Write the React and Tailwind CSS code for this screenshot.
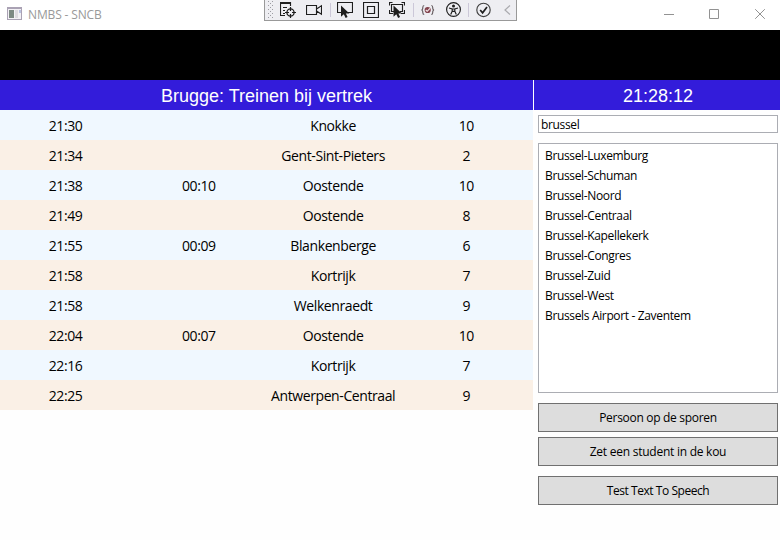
import React from 'react';

const departures = [
  ['21:30', '', 'Knokke', '10'],
  ['21:34', '', 'Gent-Sint-Pieters', '2'],
  ['21:38', '00:10', 'Oostende', '10'],
  ['21:49', '', 'Oostende', '8'],
  ['21:55', '00:09', 'Blankenberge', '6'],
  ['21:58', '', 'Kortrijk', '7'],
  ['21:58', '', 'Welkenraedt', '9'],
  ['22:04', '00:07', 'Oostende', '10'],
  ['22:16', '', 'Kortrijk', '7'],
  ['22:25', '', 'Antwerpen-Centraal', '9'],
];

const stations = [
  'Brussel-Luxemburg',
  'Brussel-Schuman',
  'Brussel-Noord',
  'Brussel-Centraal',
  'Brussel-Kapellekerk',
  'Brussel-Congres',
  'Brussel-Zuid',
  'Brussel-West',
  'Brussels Airport - Zaventem',
];

function Icon({ className = '', w = 16, children }) {
  return (
    <svg width={w} height="16" viewBox={`0 0 ${w} 16`} fill="none" stroke="#1e1e1e" strokeWidth="1.15" className={`shrink-0 ${className}`}>
      {children}
    </svg>
  );
}

function Separator({ className }) {
  return <div className={`h-[14px] w-px shrink-0 bg-[#ccc8d8] ${className}`} />;
}

const cursor = 'M0 0V10.5L2.6 8.2L4.3 11.5L6.1 10.6L4.5 7.5H7.8Z';

function DebugToolbar() {
  return (
    <div className="absolute left-[264px] top-0 flex h-[21px] w-[253px] items-center border-x border-b border-[#999] bg-[#eeeef2]">
      <svg width="6" height="18" className="ml-[3px] shrink-0" fill="#9c9ca2">
        {[0, 4, 8, 12, 16].map((y) => (
          <g key={y}>
            <rect x="0" y={y} width="1" height="1" />
            <rect x="4" y={y} width="1" height="1" />
            {y < 16 && <rect x="2" y={y + 2} width="1" height="1" />}
          </g>
        ))}
      </svg>
      <Icon className="ml-[6px]">
        <path d="M.5 13.5V.5H10.5V4" />
        <path d="M0 1.5H11M3 5.5H7M3 8.5H5M3 11.5H5M0 13.5H5" />
        <circle cx="10.5" cy="10.5" r="3.6" strokeWidth="1.3" />
        <path d="M10.5 5V9M10.5 12V16M5 10.5H9M12 10.5H16" strokeWidth="1.2" />
      </Icon>
      <Icon className="ml-[10px]">
        <path d="M.5 3.5H10.5V12.5H.5ZM10.5 7L15.5 3.8V12.2L10.5 9" />
      </Icon>
      <Separator className="ml-[8px]" />
      <Icon className="ml-[6px]">
        <path d="M4 10.5H.5V.5H15.5V10.5H11" />
        <path d={cursor} fill="#1e1e1e" stroke="none" transform="translate(4 3.5) scale(1.08)" />
      </Icon>
      <Icon className="ml-[10px]">
        <path d="M.5 .5H15.5V15.5H.5ZM4.5 4.5H11.5V11.5H4.5Z" strokeWidth="1.2" />
      </Icon>
      <Icon className="ml-[10px]">
        <path d="M3.5 .5H.5V3.5M12.5 .5H15.5V3.5M.5 8V11.5H4M15.5 8V11.5H12M5 9.5H2.5V2.5H13.5V9.5H11" />
        <path d={cursor} fill="#1e1e1e" stroke="none" transform="translate(4.5 3.5) scale(1.08)" />
      </Icon>
      <Separator className="ml-[8px]" />
      <Icon w={14} className="ml-[7px]">
        <path d="M3.2 3.5C1.8 3.5 1.8 4 1.8 5.5S1.5 8 .4 8C1.5 8 1.8 9 1.8 10.5S1.8 12.5 3.2 12.5M10.3 3.5C11.7 3.5 11.7 4 11.7 5.5S12 8 13.1 8C12 8 11.7 9 11.7 10.5S11.7 12.5 10.3 12.5" stroke="#665d60" />
        <circle cx="6.7" cy="8" r="3.1" fill="#83444e" stroke="none" />
        <path d="M4.8 8L6.2 9.3L9 6.3" stroke="#f4e8ea" />
      </Icon>
      <Icon className="ml-[11px]">
        <circle cx="7.5" cy="7.5" r="6.9" />
        <circle cx="7.5" cy="3.9" r="1.5" fill="#1e1e1e" stroke="none" />
        <path d="M3 6L6.2 7V9.2L4.7 12.5M12 6L8.8 7V9.2L10.3 12.5M6.2 7H8.8M6.5 9.4H8.5" strokeWidth="1.2" />
      </Icon>
      <Separator className="ml-[6px]" />
      <Icon className="ml-[7px]">
        <circle cx="7.5" cy="7.9" r="6.7" stroke="#404040" />
        <path d="M4.2 8L6.6 10.8L11 5" strokeWidth="1.7" />
      </Icon>
      <Icon w={7} className="ml-[12px]">
        <path d="M6 3.5L1 8L6 12.5" stroke="#aaaaae" strokeWidth="1.2" />
      </Icon>
    </div>
  );
}

function TitleBar() {
  return (
    <header className="relative flex h-[30px] items-center bg-white">
      <svg width="15" height="14" viewBox="0 0 15 14" className="ml-[7px] mt-[-2px]">
        <rect x=".5" y=".5" width="14" height="12" fill="#f3f1f5" stroke="#aaa2b4" />
        <path d="M0 1H15" stroke="#aaa2b4" strokeWidth="2" />
        <rect x="2" y="3" width="5" height="8" fill="#7d8a83" />
        <rect x="8" y="3" width="3" height="8" fill="#dedbe0" />
        <rect x="12" y="3" width="2" height="3" fill="#bac1df" />
      </svg>
      <span className="ml-[6px] text-[12px] leading-[16px] tracking-[-0.15px] text-[#999]">NMBS - SNCB</span>
      <DebugToolbar />
      <svg width="102" height="12" viewBox="0 0 102 12" fill="none" stroke="#929292" className="ml-auto mr-[14px] mt-[-2px]">
        <path d="M0 6.5H10M45.5 1.5H54.5V10.5H45.5Z" />
        <path d="M91.2 1.2L100.8 10.8M100.8 1.2L91.2 10.8" />
      </svg>
    </header>
  );
}

function ActionButton({ className = '', children }) {
  return (
    <button className={`flex h-[29px] w-full shrink-0 items-center justify-center border border-[#707070] bg-[#ddd] text-[12px] leading-[16px] ${className}`}>
      {children}
    </button>
  );
}

export default function App() {
  return (
    <div className="flex h-[540px] w-[780px] flex-col overflow-hidden bg-[#fefefe] font-['Open_Sans','Noto_Sans',sans-serif] text-black">
      <TitleBar />
      <div className="h-[50px] shrink-0 bg-black" />
      <div className="flex h-[30px] shrink-0 bg-[#331cda] font-['Liberation_Sans',Arial,sans-serif] text-[18px] leading-[32px] text-white">
        <div className="w-[533px] text-center">Brugge: Treinen bij vertrek</div>
        <div className="w-px bg-white" />
        <div className="flex-1 pl-[2px] text-center">21:28:12</div>
      </div>
      <main className="flex flex-1">
        <section className="w-[533px] text-[14px] leading-[32px] tracking-[-0.4px]">
          {departures.map((row, i) => (
            <div key={i} className="grid h-[30px] grid-cols-4 bg-[#f0f8ff] text-center even:bg-[#faf0e6]">
              {row.map((cell, j) => (
                <div key={j} className={`whitespace-nowrap ${j < 2 ? 'pr-[2px]' : ''}`}>{cell}</div>
              ))}
            </div>
          ))}
        </section>
        <aside className="flex flex-1 flex-col pl-[5px] pr-[2px] pt-[5px] text-[12px] tracking-[-0.3px]">
          <input
            defaultValue="brussel"
            className="block h-[18px] w-full border border-[#abadb3] bg-white px-[2px] text-[12px] leading-[16px] tracking-[-0.35px]"
          />
          <ul className="mt-[10px] h-[250px] shrink-0 border border-[#abadb3] bg-white pl-[6px] pt-[2px] tracking-[-0.35px]">
            {stations.map((name) => (
              <li key={name} className="h-[20px] leading-[20px]">{name}</li>
            ))}
          </ul>
          <ActionButton className="mt-[10px] tracking-[-0.3px]">Persoon op de sporen</ActionButton>
          <ActionButton className="mt-[5px] tracking-[-0.25px]">Zet een student in de kou</ActionButton>
          <ActionButton className="mt-[10px] tracking-[-0.45px]">Test Text To Speech</ActionButton>
        </aside>
      </main>
    </div>
  );
}
